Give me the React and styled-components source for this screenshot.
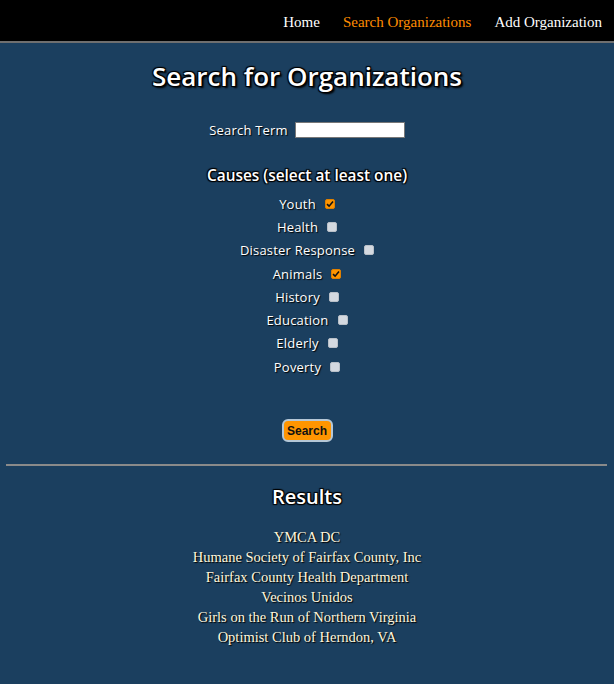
import React, { useState } from "react";
import styled, { createGlobalStyle } from "styled-components";

const GlobalStyle = createGlobalStyle`
  html, body {
    margin: 0;
    padding: 0;
    background: #1b3f5f;
  }
  body {
    font-family: "Open Sans", "DejaVu Sans", sans-serif;
    color: #fff;
  }
`;

const causes = [
  { name: "Youth", checked: true },
  { name: "Health", checked: false },
  { name: "Disaster Response", checked: false },
  { name: "Animals", checked: true },
  { name: "History", checked: false },
  { name: "Education", checked: false },
  { name: "Elderly", checked: false },
  { name: "Poverty", checked: false },
];

const results = [
  "YMCA DC",
  "Humane Society of Fairfax County, Inc",
  "Fairfax County Health Department",
  "Vecinos Unidos",
  "Girls on the Run of Northern Virginia",
  "Optimist Club of Herndon, VA",
];

const App = () => {
  const [checked, setChecked] = useState(causes.map((c) => c.checked));

  return (
    <Page>
      <GlobalStyle />
      <Header>
        <NavLink href="#">Home</NavLink>
        <NavLink href="#" $active>
          Search Organizations
        </NavLink>
        <NavLink href="#">Add Organization</NavLink>
      </Header>
      <Main>
        <Title>Search for Organizations</Title>
        <SearchRow>
          <Label>Search Term</Label>
          <TextInput type="text" />
        </SearchRow>
        <SubTitle>Causes (select at least one)</SubTitle>
        <CauseList>
          {causes.map((c, i) => (
            <CauseRow key={c.name}>
              <Label>{c.name}</Label>
              <Box
                $checked={checked[i]}
                onClick={() =>
                  setChecked(checked.map((v, j) => (j === i ? !v : v)))
                }
              >
                {checked[i] && (
                  <svg width="8" height="8" viewBox="0 0 8 8">
                    <path
                      d="M1 4.2 L3.1 6.2 L7 1.6"
                      fill="none"
                      stroke="#111"
                      strokeWidth="1.6"
                    />
                  </svg>
                )}
              </Box>
            </CauseRow>
          ))}
        </CauseList>
        <SearchButton>Search</SearchButton>
      </Main>
      <Divider />
      <Results>
        <ResultsTitle>Results</ResultsTitle>
        <ResultList>
          {results.map((r) => (
            <ResultItem key={r}>{r}</ResultItem>
          ))}
        </ResultList>
      </Results>
    </Page>
  );
};

const Page = styled.div`
  min-height: 684px;
  background: #1b3f5f;
`;
const Header = styled.nav`
  height: 43px;
  background: #000;
  border-bottom: 2px solid #6f6f6f;
  display: flex;
  justify-content: flex-end;
  align-items: center;
  gap: 23px;
  padding: 3px 12px 0 0;
  box-sizing: border-box;
`;
const NavLink = styled.a`
  font-family: "Liberation Serif", "DejaVu Serif", serif;
  font-size: 15px;
  color: ${(p) => (p.$active ? "#ff8c00" : "#fff")};
  text-decoration: none;
`;
const Main = styled.div`
  display: flex;
  flex-direction: column;
  align-items: center;
`;
const Title = styled.h1`
  margin: 17px 0 0;
  font-family: "Open Sans", sans-serif;
  font-weight: 600;
  font-size: 26px;
  line-height: 32px;
  color: #fff;
  text-shadow: 1px 1px 1px #000, -1px -1px 1px #000, 1px -1px 1px #000,
    -1px 1px 1px #000, 2px 2px 2px #000;
`;
const SearchRow = styled.div`
  display: flex;
  align-items: center;
  gap: 7px;
  margin-top: 29px;
`;
const Label = styled.span`
  font-size: 13px;
  letter-spacing: 0.2px;
  color: #fff;
  text-shadow: 1px 1px 1px #000;
`;
const TextInput = styled.input`
  width: 110px;
  height: 16px;
  box-sizing: border-box;
  border: 1px solid #777;
  background: #fff;
  padding: 0 3px;
`;
const SubTitle = styled.h3`
  margin: 26px 0 0;
  font-size: 15.4px;
  font-weight: 600;
  line-height: 22px;
  color: #fff;
  text-shadow: 1px 1px 1px #000, -1px -1px 1px #000, 1px -1px 1px #000,
    -1px 1px 1px #000;
`;
const CauseList = styled.div`
  display: flex;
  flex-direction: column;
  align-items: center;
  margin-top: 5px;
`;
const CauseRow = styled.label`
  display: flex;
  align-items: center;
  gap: 9px;
  height: 23.3px;
`;
const Box = styled.span`
  width: 10px;
  height: 10px;
  border-radius: 2px;
  box-sizing: border-box;
  display: flex;
  align-items: center;
  justify-content: center;
  background: ${(p) => (p.$checked ? "#ff9500" : "#d4d9e0")};
  border: 1px solid ${(p) => (p.$checked ? "#e08000" : "#b9c0c8")};
  cursor: pointer;
`;
const SearchButton = styled.button`
  margin-top: 41px;
  width: 51px;
  height: 23px;
  border-radius: 6px;
  border: 2px solid #b5c7d6;
  background: #ff9500;
  color: #111;
  font-family: "Liberation Sans", Arial, sans-serif;
  font-weight: bold;
  font-size: 12px;
  padding: 0;
  cursor: pointer;
`;
const Divider = styled.hr`
  margin: 22px 7px 0 6px;
  border: none;
  height: 2px;
  background: #8a8a8a;
`;
const Results = styled.div`
  display: flex;
  flex-direction: column;
  align-items: center;
`;
const ResultsTitle = styled.h2`
  margin: 18px 0 0;
  font-size: 20px;
  font-weight: 600;
  line-height: 26px;
  color: #fff;
  text-shadow: 1px 1px 1px #000, -1px -1px 1px #000, 1px -1px 1px #000,
    -1px 1px 1px #000;
`;
const ResultList = styled.ul`
  list-style: none;
  margin: 17px 0 0;
  padding: 0;
  text-align: center;
`;
const ResultItem = styled.li`
  font-family: "Liberation Serif", "DejaVu Serif", serif;
  font-size: 14.5px;
  line-height: 20px;
  color: #fff6dc;
  text-shadow: 1px 1px 1px #000;
`;

export default App;
